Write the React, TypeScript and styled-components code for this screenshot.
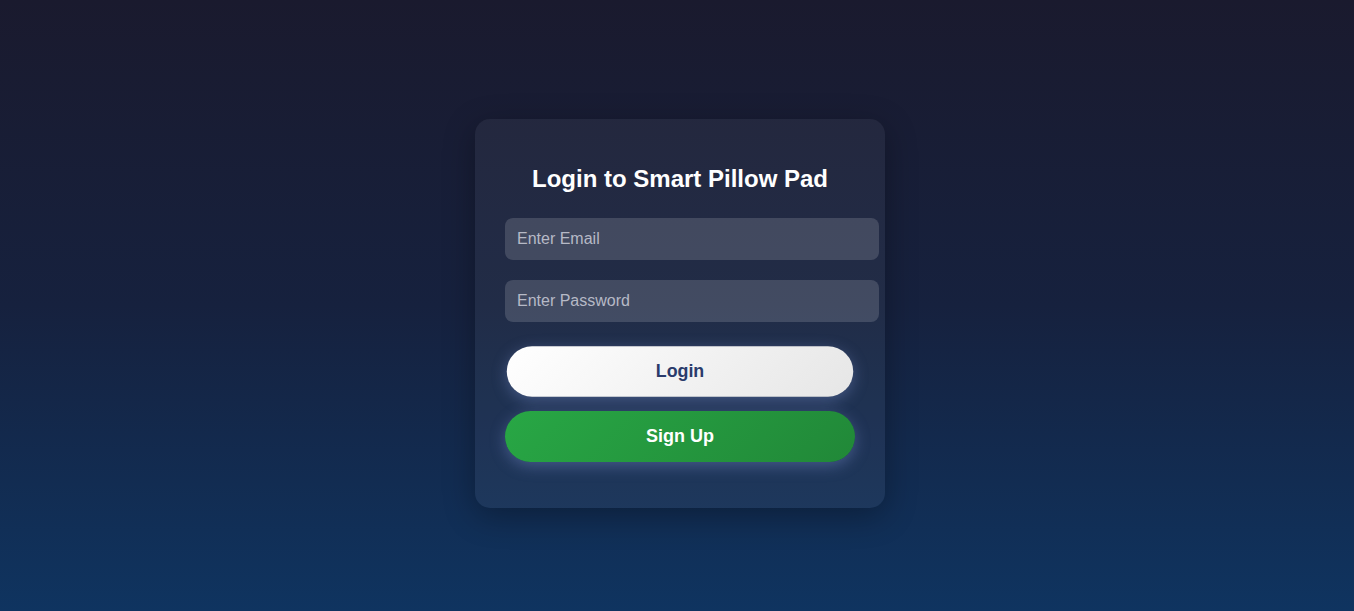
import React from "react";
import styled, { createGlobalStyle } from "styled-components";

const GlobalStyle = createGlobalStyle`
  html, body { margin: 0; padding: 0; }
  body {
    font-family: "Liberation Sans", Arial, sans-serif;
    background: linear-gradient(to bottom, #1a1a2e 0%, #16213e 50%, #0f3460 100%);
    min-height: 100vh;
  }
  * { box-sizing: border-box; }
`;

const Page = styled.main`
  min-height: 100vh;
  padding: 16px 0 0 6px;
  display: flex;
  align-items: center;
  justify-content: center;
`;

const Card = styled.form`
  width: 410px;
  padding: 46px 30px 46px 30px;
  border-radius: 15px;
  background: rgba(255, 255, 255, 0.05);
  box-shadow: 0 8px 32px rgba(0, 0, 0, 0.3);
  display: flex;
  flex-direction: column;
  align-items: stretch;
`;

const Title = styled.h2`
  margin: 0 0 25px;
  font-size: 24px;
  font-weight: 700;
  color: #ffffff;
  text-align: center;
`;

const Input = styled.input<{ $gapAfter: number }>`
  width: 374px;
  height: 42px;
  padding: 12px;
  margin: 0 0 ${(p) => p.$gapAfter}px;
  border: none;
  border-radius: 8px;
  background: rgba(255, 255, 255, 0.15);
  color: #ffffff;
  font-family: "Liberation Sans", Arial, sans-serif;
  font-size: 16px;
  outline: none;
  &::placeholder { color: #b6b9c6; }
`;

const Button = styled.button<{ $variant: "light" | "green"; $gapAfter: number; $scale: number }>`
  width: 350px;
  height: 51px;
  margin: 0 0 ${(p) => p.$gapAfter}px;
  border: none;
  border-radius: 26px;
  font-family: "Liberation Sans", Arial, sans-serif;
  font-size: 18px;
  font-weight: 700;
  cursor: pointer;
  transform: scale(${(p) => p.$scale});
  background: ${(p) =>
    p.$variant === "light"
      ? "linear-gradient(135deg, #ffffff 0%, #e6e6e6 100%)"
      : "linear-gradient(135deg, #28a745 0%, #218838 100%)"};
  color: ${(p) => (p.$variant === "light" ? "#2a3b6b" : "#ffffff")};
  box-shadow: 0 4px 15px rgba(140, 160, 230, 0.35);
`;

export default function App() {
  return (
    <>
      <GlobalStyle />
      <Page>
        <Card onSubmit={(e) => e.preventDefault()}>
          <Title>Login to Smart Pillow Pad</Title>
          <Input $gapAfter={20} type="email" placeholder="Enter Email" />
          <Input $gapAfter={24} type="password" placeholder="Enter Password" />
          <Button $variant="light" $gapAfter={14} $scale={0.99} type="submit">
            Login
          </Button>
          <Button $variant="green" $gapAfter={0} $scale={1} type="button">
            Sign Up
          </Button>
        </Card>
      </Page>
    </>
  );
}
